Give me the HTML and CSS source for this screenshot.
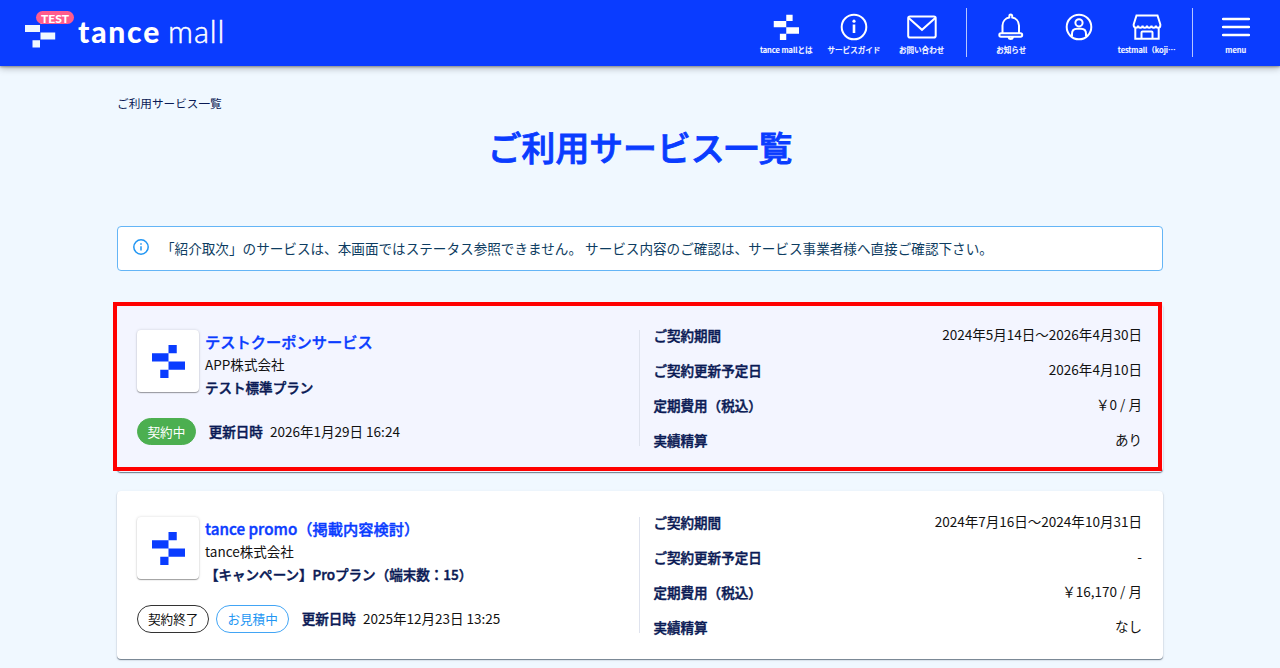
FILE: index.html
```html
<!DOCTYPE html>
<html lang="ja">
<head>
  <meta charset="UTF-8" />
  <meta name="viewport" content="width=device-width, initial-scale=1.0" />
  <title>ご利用サービス一覧 - tance mall</title>
  <link rel="stylesheet" href="styles.css">
</head>
<body>
  <svg width="0" height="0" class="defs">
    <symbol id="mark" viewBox="0 0 32 32">
      <path d="M16 0h8v8h-8zM0 8h16v8H0zM16 16h16v8H16zM8 24h8v8H8z" fill="currentColor" />
    </symbol>
  </svg>

  <header class="header">
    <a class="logo">
      <svg class="logo-mark" viewBox="0 0 31 31"><path d="M15.500 0h7.500v7h-7.500zM0 8h15v7H0zM15.500 15.500h14.700v7H15.500zM7.500 23.300h7.500v7.200H7.500z" fill="#f0f8ff" /></svg>
      <span class="logo-badge">TEST</span>
      <span class="logo-text"><b>tance</b><span>mall</span></span>
    </a>
    <nav class="nav">
      <a class="nav-item">
        <svg viewBox="0 0 28 28"><use href="#mark" x="1.500" y="1.500" width="25.500" height="25.500" /></svg>
        <span>tance mallとは</span>
      </a>
      <a class="nav-item">
        <svg viewBox="0 0 28 28"><circle cx="14" cy="14" r="12.300" /><path d="M14 11.500v8.500" stroke-width="2.600" /><circle cx="14" cy="8.200" r="1.600" class="solid" /></svg>
        <span>サービスガイド</span>
      </a>
      <a class="nav-item">
        <svg class="wide" viewBox="0 0 30 28"><rect x="1.200" y="3.500" width="27.500" height="21" rx="1.800" /><path d="M1.700 5L15 16.800 28.200 5" /></svg>
        <span>お問い合わせ</span>
      </a>
      <span class="nav-line"></span>
      <a class="nav-item">
        <svg viewBox="0 0 28 28"><path d="M5.500 20.300V12.500a8.300 8.300 0 0 1 6.800-8V3a1.400 1.400 0 0 1 2.900 0v1.500a8.300 8.300 0 0 1 6.800 8v7.800M4 20.300h19.500a1.700 1.700 0 0 1 0 3.400H4a1.700 1.700 0 0 1 0-3.400zM11.500 24.300a2.300 2.300 0 0 0 4.500 0" /></svg>
        <span>お知らせ</span>
      </a>
      <a class="nav-item">
        <svg viewBox="0 0 28 28"><circle cx="14" cy="14" r="12.300" /><circle cx="14" cy="9.800" r="3.600" /><path d="M7 23.500v-2.700c0-3.600 2.500-5 5-5h4c2.500 0 5 1.400 5 5v2.700" /></svg>
        <span></span>
      </a>
      <a class="nav-item">
        <svg class="wide" viewBox="0 0 30 28"><path d="M4.500 2.500h21l2.800 8.800v1.200a2.200 2.200 0 0 1-4.400 0 2.200 2.200 0 0 1-4.450 0 2.200 2.200 0 0 1-4.450 0 2.200 2.200 0 0 1-4.450 0 2.200 2.200 0 0 1-4.450 0 2.200 2.200 0 0 1-4.400 0v-1.200zM3.300 15v10.800h23.400V15M9.500 25.500v-6a1 1 0 0 1 1-1h9a1 1 0 0 1 1 1v6" /></svg>
        <span>testmall（koji…</span>
      </a>
      <span class="nav-line"></span>
      <a class="nav-item nav-menu">
        <svg viewBox="0 0 28 28"><path d="M1 6h26M1 14h26M1 22h26" stroke-width="2.400" stroke-linecap="round" /></svg>
        <span>menu</span>
      </a>
    </nav>
  </header>

  <main class="container">
    <div class="breadcrumb">ご利用サービス一覧</div>
    <h1>ご利用サービス一覧</h1>

    <div class="alert">
      <svg viewBox="0 0 16 16"><circle cx="8" cy="8" r="7.200" /><path d="M8 7.200v4.300M8 4.300v1.500" /></svg>
      <p>「紹介取次」のサービスは、本画面ではステータス参照できません。 サービス内容のご確認は、サービス事業者様へ直接ご確認下さい。</p>
    </div>

    <section class="card selected">
      <div class="card-main">
        <div class="service">
          <div class="thumb"><svg><use href="#mark" /></svg></div>
          <div class="service-text">
            <h2>テストクーポンサービス</h2>
            <p>APP株式会社</p>
            <p class="strong">テスト標準プラン</p>
          </div>
        </div>
        <div class="status">
          <span class="tag tag-active">契約中</span>
          <span class="strong updated">更新日時</span>
          <span class="date">2026年1月29日 16:24</span>
        </div>
      </div>
      <dl class="details">
        <div><dt>ご契約期間</dt><dd>2024年5月14日～2026年4月30日</dd></div>
        <div><dt>ご契約更新予定日</dt><dd>2026年4月10日</dd></div>
        <div><dt>定期費用（税込）</dt><dd>￥0 / 月</dd></div>
        <div><dt>実績精算</dt><dd>あり</dd></div>
      </dl>
    </section>

    <section class="card">
      <div class="card-main">
        <div class="service">
          <div class="thumb"><svg><use href="#mark" /></svg></div>
          <div class="service-text">
            <h2>tance promo（掲載内容検討）</h2>
            <p>tance株式会社</p>
            <p class="strong">【キャンペーン】Proプラン（端末数：15）</p>
          </div>
        </div>
        <div class="status">
          <span class="tag">契約終了</span>
          <span class="tag tag-quote">お見積中</span>
          <span class="strong updated">更新日時</span>
          <span class="date">2025年12月23日 13:25</span>
        </div>
      </div>
      <dl class="details">
        <div><dt>ご契約期間</dt><dd>2024年7月16日～2024年10月31日</dd></div>
        <div><dt>ご契約更新予定日</dt><dd>-</dd></div>
        <div><dt>定期費用（税込）</dt><dd>￥16,170 / 月</dd></div>
        <div><dt>実績精算</dt><dd>なし</dd></div>
      </dl>
    </section>
  </main>
</body>
</html>
```

FILE: styles.css
```css
* {
  box-sizing: border-box;
}
body {
  margin: 0;
  height: 668px;
  overflow: hidden;
  background: #f0f8ff;
  color: #111;
  font-family: "Noto Sans CJK JP", sans-serif;
  font-size: 13.54px;
}
h1, h2, p, dl, dd {
  margin: 0;
}
.defs {
  position: absolute;
}

/* header */
.header {
  position: relative;
  display: flex;
  justify-content: space-between;
  height: 66px;
  padding: 0 10px 0 25px;
  background: #0a3cff;
  color: #fff;
  box-shadow: 0 1px 2px rgba(0, 0, 0, 0.3), 0 2px 7px rgba(0, 0, 0, 0.3);
}
.logo {
  position: relative;
  display: flex;
  padding-top: 17px;
}
.logo-mark {
  width: 31px;
  height: 31px;
}
.logo-badge {
  position: absolute;
  left: 11px;
  top: 11px;
  width: 38px;
  height: 13px;
  border-radius: 7px;
  background: #ff5c8d;
  font: 900 12px/15px Lato, sans-serif;
  text-align: center;
}
.logo-text {
  display: flex;
  gap: 7px;
  margin-left: 22px;
  font-family: Lato, sans-serif;
  font-size: 30px;
  line-height: 28px;
}
.logo-text b {
  font-weight: 900;
  letter-spacing: 1.8px;
}
.logo-text span {
  font-weight: 300;
  font-size: 31px;
  letter-spacing: 0.9px;
  -webkit-text-stroke: 0.5px #fff;
}
.nav {
  display: flex;
}
.nav-item {
  display: flex;
  flex-direction: column;
  align-items: center;
  width: 67.7px;
  padding-top: 13px;
  font-size: 7.55px;
  font-weight: 500;
  line-height: 12px;
  white-space: nowrap;
  -webkit-text-stroke: 0.2px #fff;
}
.nav-item svg {
  width: 28px;
  height: 28px;
  margin-bottom: 3px;
  fill: none;
  stroke: #fff;
  stroke-width: 2;
}
.nav-item svg.wide {
  width: 30px;
}
.nav-item use {
  stroke: none;
}
.nav-item .solid {
  fill: #fff;
  stroke: none;
}
.nav-menu {
  width: 68.5px;
}
.nav-line {
  width: 1px;
  height: 49px;
  margin: 8px 10px 0 11px;
  background: rgba(255, 255, 255, 0.7);
}
.nav-line:nth-of-type(2) {
  margin-right: 9px;
}

/* page */
.container {
  width: 1046px;
  margin: 0 auto;
  padding-top: 28px;
}
.breadcrumb {
  color: #0a1a55;
  font-size: 11.65px;
  line-height: 18px;
}
h1 {
  margin-top: 10px;
  color: #0a3cff;
  font-size: 33.85px;
  font-weight: 500;
  line-height: 50px;
  text-align: center;
  -webkit-text-stroke: 0.9px #0a3cff;
}
.alert {
  display: flex;
  align-items: center;
  height: 45px;
  margin-top: 54px;
  padding-left: 15px;
  border: 1px solid #64b5f6;
  border-radius: 4px;
  background: #fff;
  color: #0d3c61;
}
.alert svg {
  width: 16px;
  height: 16px;
  margin: -3px 12px 0 0;
  fill: none;
  stroke: #2196f3;
  stroke-width: 1.5;
}
.alert p {
  margin-top: -2px;
  font-size: 13.6px;
}

/* service cards */
.card {
  position: relative;
  display: flex;
  height: 168px;
  margin-bottom: 19px;
  padding: 26px 21px 0 20px;
  border-radius: 4px;
  background: #fff;
  box-shadow: 0 1px 1px rgba(0, 20, 40, 0.5), 0 1px 3px rgba(0, 20, 40, 0.1);
}
.alert + .card {
  margin-top: 33px;
}
.selected {
  background: #f3f5ff;
}
.selected::after {
  content: "";
  position: absolute;
  inset: -2px 1px 1px -4px;
  border: 4px solid #f00;
}
.card-main {
  width: 502px;
}
.service {
  display: flex;
  height: 70px;
}
.thumb {
  display: flex;
  align-items: center;
  justify-content: center;
  width: 62px;
  height: 62px;
  margin-right: 6px;
  border-radius: 4px;
  background: #fff;
  color: #0a3cff;
  box-shadow: 0 1px 1px rgba(0, 0, 0, 0.35), 0 0 3px rgba(0, 0, 0, 0.15);
}
.thumb svg {
  width: 33px;
  height: 33px;
}
.service-text {
  margin-top: -1px;
}
h2 {
  color: #0a3cff;
  font-size: 15.25px;
  font-weight: 500;
  line-height: 24px;
  -webkit-text-stroke: 0.4px #0a3cff;
}
.service-text p {
  line-height: 22.7px;
}
.strong, dt {
  color: #0a1a55;
  font-weight: 500;
  -webkit-text-stroke: 0.45px #0a1a55;
}
.status {
  display: flex;
  align-items: center;
  height: 27px;
  margin-top: 18px;
}
.tag {
  height: 28px;
  margin-right: 7px;
  padding: 0 10px;
  border: 1px solid #333;
  border-radius: 14px;
  color: #111;
  font-size: 12.6px;
  line-height: 25px;
}
.tag-active {
  height: 27px;
  padding: 0 9.5px;
  border-color: #4caf50;
  background: #4caf50;
  color: #fff;
}
.tag-quote {
  border-color: #42a5f5;
  color: #2196f3;
}
.updated {
  margin: -1px 7px 0 6px;
}
.date {
  margin-top: -1px;
}
.details {
  flex: 1;
  height: 116px;
  padding-left: 13.5px;
  border-left: 1px solid #dfe3ee;
}
.details div {
  display: flex;
  justify-content: space-between;
  height: 34.9px;
  line-height: 11px;
}
.details dd {
  margin-top: -1px;
}
```
